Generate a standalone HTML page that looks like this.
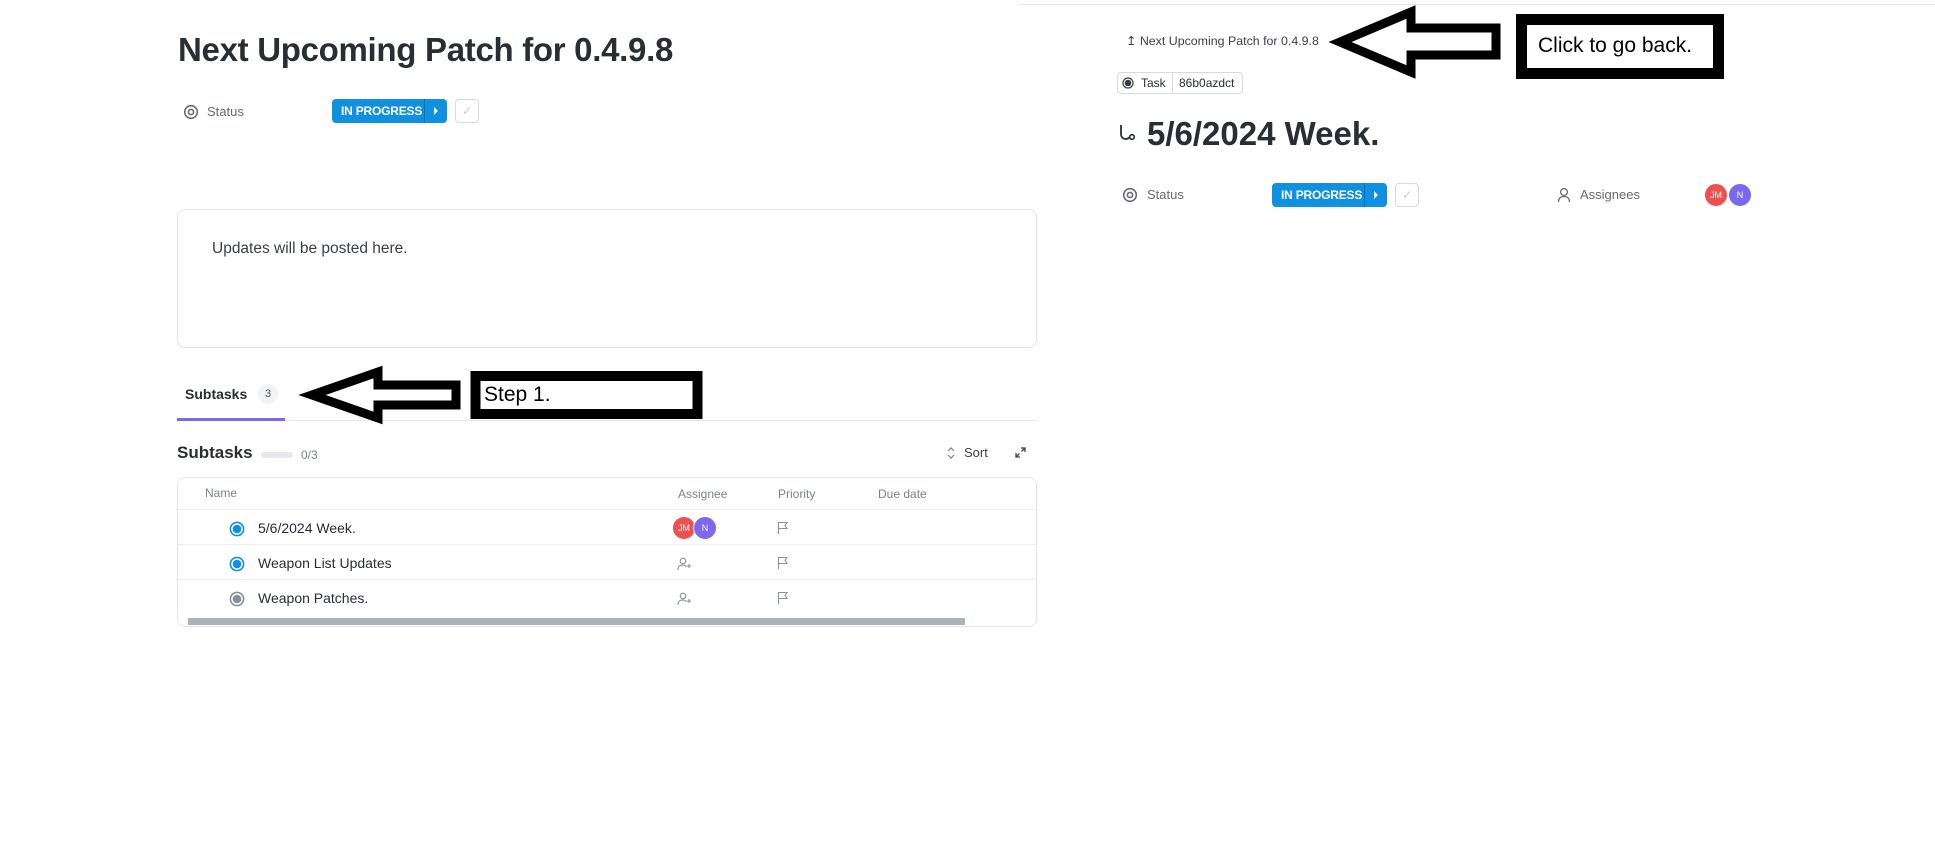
<!DOCTYPE html>
<html><head><meta charset="utf-8"><style>
*{margin:0;padding:0;box-sizing:border-box}
body{width:1935px;height:864px;background:#fff;font-family:"Liberation Sans",sans-serif;color:#292d34;position:relative;overflow:hidden}
.a{position:absolute;white-space:nowrap}
.btn{position:absolute;background:#1090e0;color:#fff;font-weight:bold;font-size:12px;border-radius:4px;display:flex;align-items:center}
.btn .t{padding-left:9px;flex:1;letter-spacing:-0.2px}
.btn .r{width:23px;height:100%;border-left:1px solid #0b6fb0;display:flex;align-items:center;justify-content:center}
.chk{position:absolute;border:1px solid #d6d9de;border-radius:4px;width:24px;height:24px;color:#c8ccd2;font-size:12px;display:flex;align-items:center;justify-content:center}
.lbl{font-size:13px;color:#646a73}
.av{position:absolute;width:24px;height:24px;border-radius:50%;color:#fff;font-size:9px;display:flex;align-items:center;justify-content:center;border:1px solid #fff}
.hd{font-size:12px;color:#7c828d}
.row{font-size:14px;color:#292d34}
</style></head><body>

<!-- left -->
<div class="a" style="left:178px;top:31px;font-size:33px;font-weight:bold;letter-spacing:-0.3px">Next Upcoming Patch for 0.4.9.8</div>

<svg class="a" style="left:183px;top:104px" width="16" height="16" viewBox="0 0 16 16"><circle cx="8" cy="8" r="6.3" fill="none" stroke="#646a73" stroke-width="1.6"/><circle cx="8" cy="8" r="2.6" fill="none" stroke="#646a73" stroke-width="1.6"/></svg>
<div class="a lbl" style="left:207px;top:104px">Status</div>
<div class="btn" style="left:332px;top:99px;width:115px;height:24px"><span class="t">IN PROGRESS</span><span class="r"><svg width="6" height="8"><path d="M1 0L5 4L1 8Z" fill="#fff"/></svg></span></div>
<div class="chk" style="left:455px;top:99px">✓</div>

<div class="a" style="left:177px;top:209px;width:860px;height:139px;border:1px solid #e2e4e8;border-radius:8px"></div>
<div class="a" style="left:212px;top:240px;font-size:15.5px;color:#3b3f45">Updates will be posted here.</div>

<div class="a" style="left:185px;top:386px;font-size:14px;font-weight:600">Subtasks</div>
<div class="a" style="left:258px;top:384px;width:20px;height:20px;border-radius:10px;background:#f2f3f5;font-size:11px;color:#555;text-align:center;line-height:20px">3</div>
<div class="a" style="left:177px;top:420px;width:860px;height:1px;background:#e6e8eb"></div>
<div class="a" style="left:177px;top:418px;width:108px;height:3px;background:#7b68ee"></div>

<svg class="a" style="left:0;top:0" width="1935" height="864">
<polygon points="312,395 378,372 378,385 456,385 456,405 378,405 378,418" fill="#fff" stroke="#000" stroke-width="9" stroke-linejoin="miter"/>
<rect x="475.5" y="376" width="222" height="38" fill="#fff" stroke="#000" stroke-width="10"/>
<polygon points="1340,42 1411,12 1411,28 1496,28 1496,55 1411,55 1411,72" fill="#fff" stroke="#000" stroke-width="9"/>
<rect x="1521.5" y="19.5" width="197" height="54" fill="#fff" stroke="#000" stroke-width="11"/>
</svg>
<div class="a" style="left:484px;top:383px;font-size:21px;color:#000">Step 1.</div>
<div class="a" style="left:1538px;top:34px;font-size:21px;color:#000">Click to go back.</div>

<div class="a" style="left:177px;top:443px;font-size:17px;font-weight:600">Subtasks</div>
<div class="a" style="left:261px;top:452px;width:32px;height:6px;border-radius:3px;background:#e6e8eb"></div>
<div class="a" style="left:301px;top:448px;font-size:12px;color:#7c828d">0/3</div>
<svg class="a" style="left:946px;top:446px" width="10" height="14"><path d="M2 5L5 2L8 5M2 9L5 12L8 9" fill="none" stroke="#7c828d" stroke-width="1.2"/></svg>
<div class="a" style="left:964px;top:445px;font-size:13px;color:#3b3f45">Sort</div>
<svg class="a" style="left:1014px;top:446px" width="13" height="13"><path d="M7 2H11V6M11 2L7.5 5.5M6 11H2V7M2 11L5.5 7.5" fill="none" stroke="#3b3f45" stroke-width="1.3"/></svg>

<div class="a" style="left:177px;top:477px;width:860px;height:150px;border:1px solid #e2e4e8;border-radius:8px"></div>
<div class="a hd" style="left:205px;top:486px">Name</div>
<div class="a hd" style="left:678px;top:487px">Assignee</div>
<div class="a hd" style="left:778px;top:487px">Priority</div>
<div class="a hd" style="left:878px;top:487px">Due date</div>
<div class="a" style="left:178px;top:509px;width:858px;height:1px;background:#eceef1"></div>
<div class="a" style="left:178px;top:544px;width:858px;height:1px;background:#eceef1"></div>
<div class="a" style="left:178px;top:579px;width:858px;height:1px;background:#eceef1"></div>

<svg class="a" style="left:229px;top:521px" width="16" height="16"><circle cx="8" cy="8" r="6.6" fill="none" stroke="#1090e0" stroke-width="1.6"/><circle cx="8" cy="8" r="4.3" fill="#1090e0"/></svg>
<svg class="a" style="left:229px;top:556px" width="16" height="16"><circle cx="8" cy="8" r="6.6" fill="none" stroke="#1090e0" stroke-width="1.6"/><circle cx="8" cy="8" r="4.3" fill="#1090e0"/></svg>
<svg class="a" style="left:229px;top:591px" width="16" height="16"><circle cx="8" cy="8" r="6.6" fill="none" stroke="#87909e" stroke-width="1.6"/><circle cx="8" cy="8" r="4.3" fill="#87909e"/></svg>
<div class="a row" style="left:258px;top:520px">5/6/2024 Week.</div>
<div class="a row" style="left:258px;top:555px">Weapon List Updates</div>
<div class="a row" style="left:258px;top:590px">Weapon Patches.</div>

<div class="av" style="left:672px;top:516px;background:#f04f4f">JM</div>
<div class="av" style="left:693px;top:516px;background:#7b68ee">N</div>
<svg class="a" style="left:677px;top:557px" width="16" height="14"><circle cx="6" cy="4" r="2.8" fill="none" stroke="#87909e" stroke-width="1.1"/><path d="M1 13C1 9 3 8 6 8C8 8 9 9 9.5 10M12 7V11M10 9H14" fill="none" stroke="#87909e" stroke-width="1.1"/></svg>
<svg class="a" style="left:677px;top:592px" width="16" height="14"><circle cx="6" cy="4" r="2.8" fill="none" stroke="#87909e" stroke-width="1.1"/><path d="M1 13C1 9 3 8 6 8C8 8 9 9 9.5 10M12 7V11M10 9H14" fill="none" stroke="#87909e" stroke-width="1.1"/></svg>
<svg class="a" style="left:777px;top:521px" width="12" height="14"><path d="M1.5 13V1.5H10L8 4.5L10 7.5H1.5" fill="none" stroke="#87909e" stroke-width="1.1"/></svg>
<svg class="a" style="left:777px;top:556px" width="12" height="14"><path d="M1.5 13V1.5H10L8 4.5L10 7.5H1.5" fill="none" stroke="#87909e" stroke-width="1.1"/></svg>
<svg class="a" style="left:777px;top:591px" width="12" height="14"><path d="M1.5 13V1.5H10L8 4.5L10 7.5H1.5" fill="none" stroke="#87909e" stroke-width="1.1"/></svg>
<div class="a" style="left:188px;top:618px;width:777px;height:7px;background:#adb1b8"></div>

<!-- right -->
<div class="a" style="left:1019px;top:4px;width:916px;height:1px;background:#e6e8eb"></div>
<div class="a" style="left:1126px;top:33px;font-size:12.4px;color:#3b3f45">↥ Next Upcoming Patch for 0.4.9.8</div>
<div class="a" style="left:1117px;top:72px;width:126px;height:22px;border:1px solid #d6d9de;border-radius:4px"></div>
<div class="a" style="left:1172px;top:72px;width:1px;height:22px;background:#d6d9de"></div>
<svg class="a" style="left:1122px;top:77px" width="12" height="12"><circle cx="6" cy="6" r="5" fill="none" stroke="#3b3f45" stroke-width="1.2"/><circle cx="6" cy="6" r="3.3" fill="#3b3f45"/></svg>
<div class="a" style="left:1141px;top:76px;font-size:12px">Task</div>
<div class="a" style="left:1179px;top:76px;font-size:12px">86b0azdct</div>

<svg class="a" style="left:1117px;top:122px" width="20" height="22"><path d="M4 3V12C4 15 6 17 9 17C11 17 12 16 13 15" fill="none" stroke="#292d34" stroke-width="1.8"/><circle cx="15" cy="15" r="2.3" fill="none" stroke="#292d34" stroke-width="1.6"/></svg>
<div class="a" style="left:1147px;top:115px;font-size:33px;font-weight:bold">5/6/2024 Week.</div>

<svg class="a" style="left:1122px;top:187px" width="16" height="16" viewBox="0 0 16 16"><circle cx="8" cy="8" r="6.3" fill="none" stroke="#646a73" stroke-width="1.6"/><circle cx="8" cy="8" r="2.6" fill="none" stroke="#646a73" stroke-width="1.6"/></svg>
<div class="a lbl" style="left:1147px;top:187px">Status</div>
<div class="btn" style="left:1272px;top:183px;width:115px;height:24px"><span class="t">IN PROGRESS</span><span class="r"><svg width="6" height="8"><path d="M1 0L5 4L1 8Z" fill="#fff"/></svg></span></div>
<div class="chk" style="left:1395px;top:183px">✓</div>
<svg class="a" style="left:1557px;top:187px" width="14" height="16"><circle cx="7" cy="5" r="3.4" fill="none" stroke="#646a73" stroke-width="1.3"/><path d="M1.5 15C1.5 11 4 9.5 7 9.5C10 9.5 12.5 11 12.5 15" fill="none" stroke="#646a73" stroke-width="1.3"/></svg>
<div class="a lbl" style="left:1580px;top:187px">Assignees</div>
<div class="av" style="left:1704px;top:183px;background:#f04f4f">JM</div>
<div class="av" style="left:1728px;top:183px;background:#7b68ee">N</div>
</body></html>
